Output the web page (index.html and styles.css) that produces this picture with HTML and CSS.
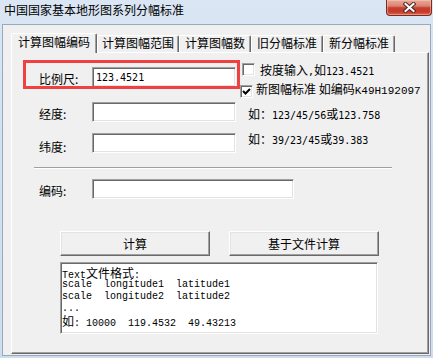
FILE: index.html
```html
<!DOCTYPE html>
<html lang="zh-CN">
<head>
<meta charset="utf-8">
<title>中国国家基本地形图系列分幅标准</title>
<link rel="stylesheet" href="styles.css">
</head>
<body>
<div class="window">
  <div class="titlebar">
    <span class="title">中国国家基本地形图系列分幅标准</span>
    <div class="close">
      <svg width="13" height="11" viewBox="0 0 13 11">
        <path d="M2.5 2 L10.5 9 M10.5 2 L2.5 9" stroke="#4b2a26" stroke-width="4" stroke-linecap="square" fill="none"/>
        <path d="M2.5 2 L10.5 9 M10.5 2 L2.5 9" stroke="#ffffff" stroke-width="2" stroke-linecap="square" fill="none"/>
      </svg>
    </div>
  </div>
  <div class="client">
    <div class="tabs">
      <div class="tab active">计算图幅编码</div>
      <div class="tab tab-tight">计算图幅范围</div>
      <div class="tab">计算图幅数</div>
      <div class="tab">旧分幅标准</div>
      <div class="tab">新分幅标准</div>
    </div>
    <div class="panel">
      <div class="highlight"></div>
      <div class="row row-scale">
        <span class="label label-scale">比例尺:</span>
        <input class="field field-short field-scale" value="123.4521">
        <div class="checks">
          <div class="check check-first">
            <span class="box"></span>
            <span class="check-text">按度输入<span class="num">,</span>如<span class="num">123.4521</span></span>
          </div>
          <div class="check check-second">
            <span class="box"><svg width="11" height="11" viewBox="0 0 11 11"><path d="M2 5 L4.5 7.5 L9 3" stroke="#000" stroke-width="2" fill="none"/></svg></span>
            <span class="check-text check-text-second">新图幅标准 如编码<span class="num-code">K49H192097</span></span>
          </div>
        </div>
      </div>
      <div class="row row-lon">
        <span class="label label-lon">经度:</span>
        <input class="field field-short">
        <span class="hint hint-lon">如：<span class="num">123/45/56</span>或<span class="num">123.758</span></span>
      </div>
      <div class="row row-lat">
        <span class="label label-lat">纬度:</span>
        <input class="field field-short">
        <span class="hint hint-lat">如：<span class="num">39/23/45</span>或<span class="num">39.383</span></span>
      </div>
      <div class="separator"></div>
      <div class="row row-code">
        <span class="label label-code">编码:</span>
        <input class="field field-long">
      </div>
      <div class="buttons">
        <button class="btn">计算</button>
        <button class="btn">基于文件计算</button>
      </div>
      <div class="memo">
        <div class="memo-line"><span class="mono">Text</span>文件格式<span class="mono">:</span></div>
        <div class="memo-line mono">scale  longitude1  latitude1</div>
        <div class="memo-line mono">scale  longitude2  latitude2</div>
        <div class="memo-line mono">...</div>
        <div class="memo-line">如<span class="mono">: 10000  119.4532  49.43213</span></div>
      </div>
    </div>
  </div>
</div>
</body>
</html>
```
FILE: styles.css
```css
* { box-sizing: border-box; }
html, body { margin: 0; padding: 0; }
body {
  width: 433px;
  height: 358px;
  overflow: hidden;
  font: 12px/14px "Noto Sans CJK SC", "Liberation Sans", sans-serif;
  color: #000;
}
.window {
  width: 433px;
  height: 358px;
  display: flex;
  flex-direction: column;
  background: linear-gradient(#dae6f4, #d2e1f2 40%, #cddcef);
  padding: 0 2px 2px;
}
.titlebar {
  height: 24px;
  flex-shrink: 0;
  display: flex;
  align-items: flex-start;
}
.title {
  padding: 3px 0 0 2px;
  font-size: 12px;
  line-height: 14px;
  color: #000;
}
.close {
  margin-left: auto;
  margin-right: -1px;
  width: 46px;
  height: 16px;
  border: 1px solid #7a2b21;
  border-top: none;
  border-radius: 0 0 4px 4px;
  background: linear-gradient(#e9a999 0%, #dc8371 40%, #c8402f 52%, #c4392a 75%, #de6248 100%);
  box-shadow: inset 0 0 0 1px rgba(255, 210, 200, 0.45);
  display: flex;
  align-items: center;
  justify-content: center;
}
.close svg { display: block; }
.client {
  flex: 1;
  display: flex;
  flex-direction: column;
  background: #f0f0f0;
  border: 1px solid #9aa8b9;
  padding: 8px 1px 1px 8px;
}
.tabs {
  display: flex;
  align-items: flex-end;
  height: 19px;
  flex-shrink: 0;
}
.tab {
  height: 17px;
  padding: 0 5px;
  border: 1px solid;
  border-bottom: none;
  border-color: #fff #696969 transparent #fff;
  border-radius: 2px 2px 0 0;
  box-shadow: inset -1px 0 #a0a0a0;
  background: #f0f0f0;
  line-height: 13px;
  white-space: nowrap;
}
.tab-tight { padding: 0 4px; }
.tab.active {
  height: 20px;
  padding: 0 6px;
  margin-bottom: -1px;
  line-height: 15px;
  position: relative;
  z-index: 1;
}
.panel {
  flex: 1;
  position: relative;
  border: 1px solid;
  border-color: #fff #696969 #696969 #fff;
  box-shadow: inset -1px -1px #a0a0a0;
  padding: 10px 0 0 22px;
}
.highlight {
  position: absolute;
  left: 11px;
  top: 7px;
  width: 217px;
  height: 29px;
  border: 3px solid #ef4141;
  pointer-events: none;
}
.row {
  display: flex;
  align-items: flex-start;
  padding-left: 5px;
}
.row-scale { height: 39px; }
.row-lon { height: 31px; }
.row-lat { height: 34px; }
.row-code { height: 20px; margin-top: 10px; }
.label {
  width: 53px;
  flex-shrink: 0;
  line-height: 14px;
}
.label-scale { margin-top: 9px; }
.label-lon { margin-top: 5px; }
.label-lat { margin-top: 7px; }
.label-code { margin-top: 5px; }
.field {
  height: 20px;
  margin: 0;
  border: 1px solid;
  border-color: #a0a0a0 #fff #fff #a0a0a0;
  box-shadow: inset 1px 1px #696969, inset -1px -1px #e3e3e3;
  background: #fff;
  padding: 0 0 0 3px;
  font: 10px "DejaVu Sans Mono", monospace;
  color: #000;
  outline: none;
  flex-shrink: 0;
}
.field-short { width: 144px; }
.field-long { width: 202px; }
.field-scale { margin-top: 4px; }
.checks {
  margin-left: 4px;
  display: flex;
  flex-direction: column;
}
.check {
  display: flex;
  align-items: flex-start;
  white-space: nowrap;
}
.check-first { margin-left: 2px; }
.check-second { margin-top: 7px; }
.box {
  width: 13px;
  height: 13px;
  flex-shrink: 0;
  border: 1px solid;
  border-color: #a0a0a0 #fff #fff #a0a0a0;
  box-shadow: inset 1px 1px #696969, inset -1px -1px #e3e3e3;
  background: #fff;
}
.box svg { display: block; }
.check-text {
  margin-left: 5px;
  line-height: 13px;
}
.check-text-second {
  margin-left: 3px;
  margin-top: -3px;
  line-height: 14px;
}
.num {
  font-family: "DejaVu Sans Mono", monospace;
  font-size: 10px;
}
.num-code {
  font-family: "Liberation Mono", monospace;
  font-size: 11px;
}
.hint {
  margin-left: 12px;
  white-space: nowrap;
}
.hint-lon { margin-top: 5px; }
.hint-lat { margin-top: -1px; }
.separator {
  width: 358px;
  height: 2px;
  border-top: 1px solid #a0a0a0;
  border-bottom: 1px solid #fff;
}
.buttons {
  display: flex;
  gap: 19px;
  margin: 32px 0 0 26px;
}
.btn {
  width: 150px;
  height: 25px;
  padding: 0;
  border: 1px solid;
  border-color: #fff #696969 #696969 #fff;
  box-shadow: inset -1px -1px #a0a0a0, inset 1px 1px #e3e3e3;
  background: #f0f0f0;
  font: 12px/14px "Noto Sans CJK SC", sans-serif;
  color: #000;
}
.memo {
  width: 318px;
  height: 72px;
  margin: 6px 0 0 26px;
  border: 1px solid;
  border-color: #a0a0a0 #fff #fff #a0a0a0;
  box-shadow: inset 1px 1px #696969, inset -1px -1px #e3e3e3;
  background: #fff;
  padding: 4px 0 0 1px;
}
.memo-line {
  height: 12px;
  line-height: 12px;
  white-space: pre;
}
.mono {
  font-family: "Liberation Mono", monospace;
  font-size: 10px;
}
```
